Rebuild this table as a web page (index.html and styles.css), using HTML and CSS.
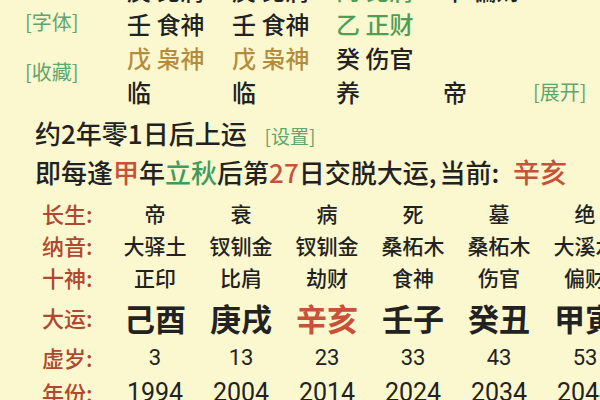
FILE: index.html
```html
<!DOCTYPE html>
<html lang="zh-CN">
<head>
<meta charset="utf-8">
<title>大运</title>
<link rel="stylesheet" href="styles.css">
</head>
<body>
<div class="page">
  <div class="pillars">
    <div class="side">
      <span class="link">[字体]</span>
      <span class="link">[收藏]</span>
    </div>
    <div class="cell c1 r1">庚 比肩</div>
    <div class="cell c2 r1">庚 比肩</div>
    <div class="cell c3 r1 green">丙 比肩</div>
    <div class="cell c4 r1">甲 偏财</div>

    <div class="cell c1 r2">壬 食神</div>
    <div class="cell c2 r2">壬 食神</div>
    <div class="cell c3 r2 green">乙 正财</div>

    <div class="cell c1 r3 gold">戊 枭神</div>
    <div class="cell c2 r3 gold">戊 枭神</div>
    <div class="cell c3 r3">癸 伤官</div>

    <div class="cell c1 r4">临</div>
    <div class="cell c2 r4">临</div>
    <div class="cell c3 r4">养</div>
    <div class="cell c4 r4">帝</div>
    <div class="cell c5 r4 link expand">[展开]</div>
  </div>

  <div class="info">
    <div class="line">约2年零1日后上运 <span class="link small">[设置]</span></div>
    <div class="line">即每逢<span class="red">甲</span>年<span class="green2">立秋</span>后第<span class="red">27</span>日交脱大运<span class="comma">,</span>当前<span class="colon">:</span> <span class="red wide">辛亥</span></div>
  </div>

  <div class="table">
    <div class="row r-sm">
      <div class="label">长生:</div>
      <div class="val">帝</div><div class="val">衰</div><div class="val">病</div><div class="val">死</div><div class="val">墓</div><div class="val">绝</div>
    </div>
    <div class="row r-sm">
      <div class="label">纳音:</div>
      <div class="val">大驿土</div><div class="val">钗钏金</div><div class="val">钗钏金</div><div class="val">桑柘木</div><div class="val">桑柘木</div><div class="val">大溪水</div>
    </div>
    <div class="row r-sm">
      <div class="label">十神:</div>
      <div class="val">正印</div><div class="val">比肩</div><div class="val">劫财</div><div class="val">食神</div><div class="val">伤官</div><div class="val">偏财</div>
    </div>
    <div class="row r-lg">
      <div class="label">大运:</div>
      <div class="val big">己酉</div><div class="val big">庚戌</div><div class="val big red">辛亥</div><div class="val big">壬子</div><div class="val big">癸丑</div><div class="val big">甲寅</div>
    </div>
    <div class="row r-sm">
      <div class="label">虚岁:</div>
      <div class="val num">3</div><div class="val num">13</div><div class="val num">23</div><div class="val num">33</div><div class="val num">43</div><div class="val num">53</div>
    </div>
    <div class="row r-yr">
      <div class="label">年份:</div>
      <div class="val num yr">1994</div><div class="val num yr">2004</div><div class="val num yr">2014</div><div class="val num yr">2024</div><div class="val num yr">2034</div><div class="val num yr">2044</div>
    </div>
  </div>
</div>
</body>
</html>
```

FILE: styles.css
```css
html, body {
  margin: 0;
  padding: 0;
  background: #fbf8cf;
  overflow: hidden;
}
body {
  width: 600px;
  height: 400px;
  font-family: "Noto Sans CJK SC", "Noto Sans", sans-serif;
  font-weight: 500;
  color: #222;
}
.page {
  width: 600px;
  height: 400px;
  overflow: hidden;
}
.pillars {
  display: grid;
  grid-template-columns: 127px 105px 104px 107px 92px 1fr;
  grid-template-rows: repeat(4, 34px);
  margin-top: -27px;
}
.side {
  grid-column: 1;
  grid-row: 2 / 5;
  display: flex;
  flex-direction: column;
  gap: 22px;
  padding-left: 25px;
  padding-top: 1px;
}
.link {
  color: #5fa56e;
  font-size: 20px;
  line-height: 28px;
  font-weight: 400;
}
.cell {
  font-size: 24px;
  line-height: 34px;
  white-space: nowrap;
}
.c1 { grid-column: 2; }
.c2 { grid-column: 3; }
.c3 { grid-column: 4; }
.c4 { grid-column: 5; }
.c5 { grid-column: 6; }
.r1 { grid-row: 1; }
.r2 { grid-row: 2; }
.r3 { grid-row: 3; }
.r4 { grid-row: 4; }
.expand {
  font-size: 20px;
  line-height: 34px;
  margin-left: -2px;
}
.green { color: #4f9e55; }
.gold { color: #b48c3e; }
.red { color: #c9503a; }
.green2 { color: #3f9b60; }

.info {
  margin-top: 4px;
  padding-left: 35px;
}
.line {
  font-size: 26px;
  line-height: 39px;
  white-space: nowrap;
}
.comma {
  margin-right: 3px;
}
.colon {
  margin-right: 8px;
}
.wide {
  font-size: 27px;
}
.small {
  font-size: 19px;
  margin-left: 12px;
}

.table {
  margin-top: 6px;
  padding-left: 42px;
}
.row {
  display: grid;
  grid-template-columns: 70px repeat(6, 86px);
  align-items: center;
}
.r-sm { height: 32px; }
.r-lg { height: 48px; }
.r-yr { height: 38px; }
.label {
  color: #b0472f;
  font-size: 22px;
  white-space: nowrap;
}
.val {
  text-align: center;
  font-size: 21px;
  white-space: nowrap;
}
.big {
  font-size: 31px;
  font-weight: 700;
}
.num {
  font-family: Roboto, "Noto Sans", sans-serif;
  font-size: 22px;
  font-weight: 400;
}
.yr {
  font-size: 25px;
}
```
